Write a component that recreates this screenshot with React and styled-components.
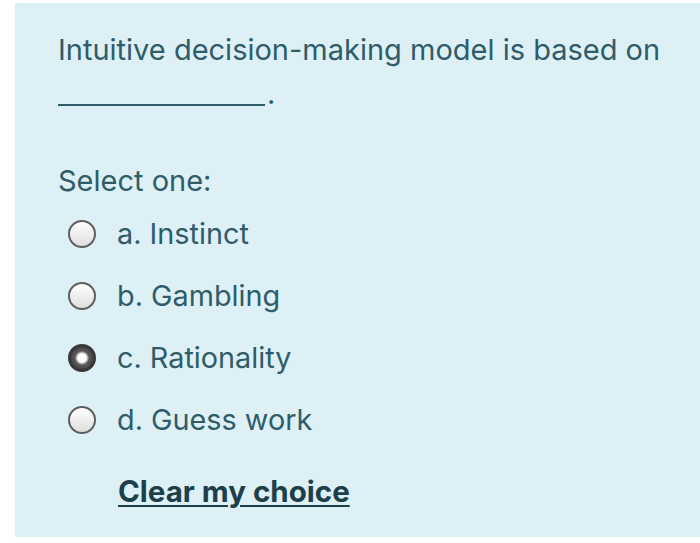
import React from "react";
import styled, { createGlobalStyle } from "styled-components";

const GlobalStyle = createGlobalStyle`
  html, body {
    margin: 0;
    padding: 0;
    background: #ffffff;
  }
  body {
    font-family: Inter, "Noto Sans", "Liberation Sans", sans-serif;
  }
`;

const options = [
  { key: "a", label: "Instinct", checked: false },
  { key: "b", label: "Gambling", checked: false },
  { key: "c", label: "Rationality", checked: true },
  { key: "d", label: "Guess work", checked: false },
];

export default function App() {
  return (
    <>
      <GlobalStyle />
      <Page>
        <Panel>
          <Question>
            Intuitive decision-making model is based on
            <br />
            <Blank />.
          </Question>
          <Prompt>Select one:</Prompt>
          <Answers>
            {options.map((o) => (
              <Option key={o.key}>
                <Radio checked={o.checked} />
                <Label>
                  {o.key}. {o.label}
                </Label>
              </Option>
            ))}
          </Answers>
          <ClearLink href="#">Clear my choice</ClearLink>
        </Panel>
      </Page>
    </>
  );
}

const Page = styled.div`
  width: 700px;
  height: 543px;
  padding: 3px 0 6px 15px;
  box-sizing: border-box;
  display: flex;
  background: #ffffff;
`;

const Panel = styled.div`
  flex: 1;
  background: #dcf0f6;
  padding: 25px 0 0 43px;
  display: flex;
  flex-direction: column;
  color: #2f5c68;
`;

const Question = styled.div`
  font-size: 29px;
  line-height: 44px;
  margin: 0;
`;

const Blank = styled.span`
  display: inline-block;
  width: 207px;
  height: 0;
  border-bottom: 2px solid #2f5c68;
  margin-right: 2px;
  vertical-align: -2px;
`;

const Prompt = styled.div`
  font-size: 29px;
  line-height: 40px;
  margin-top: 45px;
`;

const Answers = styled.div`
  display: flex;
  flex-direction: column;
  gap: 22px;
  margin-top: 13px;
  padding-left: 10px;
`;

const Option = styled.div`
  display: flex;
  align-items: center;
  gap: 21px;
  height: 40px;
`;

const Radio = styled.span`
  width: 28px;
  height: 28px;
  border-radius: 50%;
  box-sizing: border-box;
  flex: none;
  border: ${(p) => (p.checked ? "3px solid #383838" : "2px solid #5e5e5e")};
  background: ${(p) =>
    p.checked
      ? "radial-gradient(circle at 50% 50%, #ffffff 0 4px, #d8d8d8 5px, #5a5a5a 7px, #2e2e2e 100%)"
      : "linear-gradient(#ffffff, #dedede)"};
`;

const Label = styled.span`
  font-size: 28.8px;
  line-height: 40px;
`;

const ClearLink = styled.a`
  margin-top: 31px;
  margin-left: 60px;
  font-size: 29.5px;
  line-height: 40px;
  font-weight: 700;
  color: #1c3f4a;
  text-decoration: underline;
  text-decoration-thickness: 2px;
  text-underline-offset: 3px;
  align-self: flex-start;
`;
